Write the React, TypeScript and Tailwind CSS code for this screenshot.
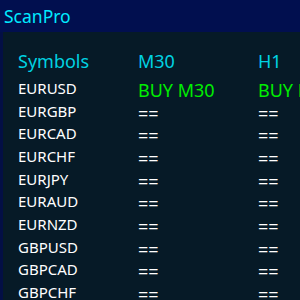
const symbols = [
  'EURUSD',
  'EURGBP',
  'EURCAD',
  'EURCHF',
  'EURJPY',
  'EURAUD',
  'EURNZD',
  'GBPUSD',
  'GBPCAD',
  'GBPCHF',
];

// only the first pair has a signal right now
function signalFor(symbol: string, tf: string) {
  if (symbol === 'EURUSD') return `BUY ${tf}`;
  return '==';
}

export default function App() {
  const timeframes = ['M30', 'H1'];

  return (
    <div className="w-[300px] h-[300px] overflow-hidden bg-[#061a27] font-['Noto_Sans',sans-serif]">
      <div className="h-[32px] bg-[#010f4f] pl-[4px] text-[17.5px] leading-[32px] text-[#00eaff]">
        ScanPro
      </div>

      <div className="h-[268px] border-l-[3px] border-[#030f45] pl-[15px] pt-[17px]">
        {/* Header */}
        <div className="flex h-[29px] items-start text-[18px] leading-[24px] text-[#00d2e2]">
          <div className="w-[120px] shrink-0">Symbols</div>
          {timeframes.map((tf) => (
            <div key={tf} className="w-[120px] shrink-0 whitespace-nowrap">
              {tf}
            </div>
          ))}
        </div>

        {/* Rows */}
        {symbols.map((s) => (
          <div key={s} className="flex h-[22.67px] items-start">
            <div className="w-[120px] shrink-0 text-[15px] leading-[20px] text-white">{s}</div>
            {timeframes.map((tf) => {
              const sig = signalFor(s, tf);
              return (
                <div
                  key={tf}
                  className={`w-[120px] shrink-0 whitespace-nowrap text-[18px] leading-[24px] ${
                    sig === '==' ? 'text-white' : 'text-[#00ee00]'
                  }`}
                >
                  {sig}
                </div>
              );
            })}
          </div>
        ))}
      </div>
    </div>
  );
}
